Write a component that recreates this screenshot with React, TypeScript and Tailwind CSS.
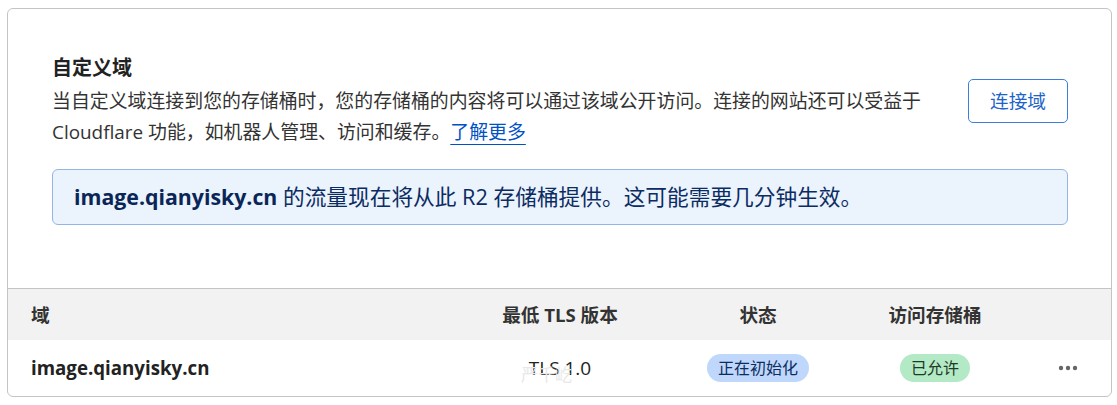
export default function App() {
  const font = { fontFamily: '"Open Sans", "Noto Sans CJK SC", sans-serif' };
  return (
    <div className="min-h-screen bg-white pl-[7px] pr-[5px] pt-[8px]" style={font}>
      <div className="w-[1105px] overflow-hidden rounded-[6px] border border-[#c4c4c4] bg-white">
        {/* header section */}
        <div className="pb-[63px] pl-[44px] pr-[43px] pt-[45px]">
          <div className="flex items-center justify-between gap-10">
            <div className="flex-1">
              <h2 className="text-[20px] font-bold leading-[28px] text-[#222]">自定义域</h2>
              <p className="mt-[4px] text-[18.9px] leading-[31px] text-[#333]">
                当自定义域连接到您的存储桶时，您的存储桶的内容将可以通过该域公开访问。连接的网站还可以受益于
                <br />
                Cloudflare 功能，如机器人管理、访问和缓存。
                <a className="text-[#0051c3] underline underline-offset-[5px]" href="#">了解更多</a>
              </p>
            </div>
            <button className="h-[44px] w-[100px] rounded-[5px] border border-[#3a7fdc] text-[18.7px] text-[#1d64c8]">
              连接域
            </button>
          </div>
          <div className="mt-[21px] flex h-[56px] items-center rounded-[6px] border border-[#92b5e2] bg-[#ebf3fd] px-[21px] text-[21.7px] text-[#0b2c62]">
            <span className="text-[21.3px] font-bold text-[#0a2657]">image.qianyisky.cn</span>
            <span>&nbsp;的流量现在将从此 R2 存储桶提供。这可能需要几分钟生效。</span>
          </div>
        </div>

        {/* table */}
        <div className="border-t border-[#c4c4c4]">
          <div className="grid h-[51px] grid-cols-[439px_180px_216px_138px_1fr] items-center bg-[#f2f2f2] pl-[23px] text-[18.6px] font-bold text-[#333]">
            <div>域</div>
            <div className="text-center">最低 TLS 版本</div>
            <div className="text-center">状态</div>
            <div className="text-center">访问存储桶</div>
            <div />
          </div>
          <div className="relative grid h-[56px] grid-cols-[439px_180px_216px_138px_1fr] items-center pl-[23px] text-[18.7px] text-[#222]">
            <div className="font-bold">image.qianyisky.cn</div>
            <div className="text-center text-[19px]">TLS 1.0</div>
            <div className="flex justify-center">
              <span className="rounded-full bg-[#bed7fa] px-[11px] text-[16px] leading-[28px] text-[#0d2d5e]">正在初始化</span>
            </div>
            <div className="flex justify-center">
              <span className="rounded-full bg-[#b3e9c5] px-[11px] text-[16px] leading-[28px] text-[#1d3a25]">已允许</span>
            </div>
            <div className="flex justify-end pr-[33px]">
              <svg width="20" height="6" viewBox="0 0 20 6" fill="#666">
                <circle cx="3" cy="3" r="2.2" />
                <circle cx="10" cy="3" r="2.2" />
                <circle cx="17" cy="3" r="2.2" />
              </svg>
            </div>
            <span className="pointer-events-none absolute left-[513px] top-[22px] text-[17px] text-[#e8e8e8]">严千屹</span>
          </div>
        </div>
      </div>
    </div>
  );
}
